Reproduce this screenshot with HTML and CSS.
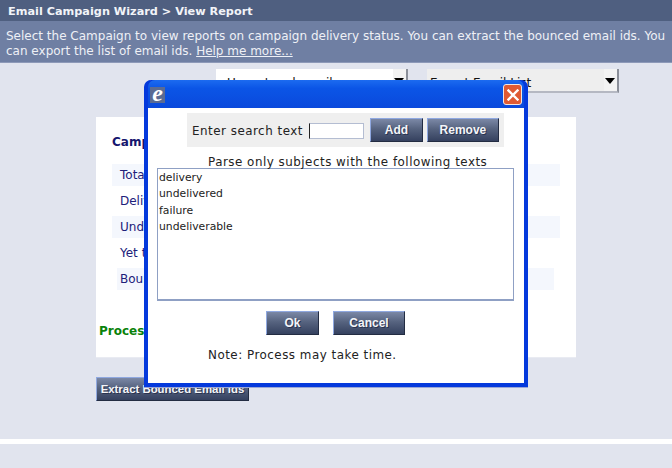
FILE: index.html
```html
<!DOCTYPE html>
<html lang="en">
<head>
  <meta charset="UTF-8" />
  <title>Email Campaign Wizard</title>
  <link rel="stylesheet" href="styles.css">
</head>

<body>
  <div class="title-bar">Email Campaign Wizard &gt; View Report</div>
  <div class="sub-bar">
    Select the Campaign to view reports on campaign delivery status. You can extract the bounced email ids. You can export the list of email ids. <a href="#">Help me more...</a>
  </div>

  <div class="picker-row">
    <div class="picker picker-white">Unsent and emails<span class="arrow"></span></div>
    <div class="picker picker-grey">Export Email List<span class="arrow"></span></div>
  </div>

  <section class="report">
    <h2>Campaign</h2>
    <div class="row shade">Total</div>
    <div class="row">Delivered</div>
    <div class="row shade">Undelivered</div>
    <div class="row">Yet to deliver</div>
    <div class="row shade short">Bounced</div>
    <p class="status">Process completed</p>
  </section>

  <button class="btn extract">Extract Bounced Email ids</button>

  <div class="band"></div>

  <!-- popup sits over the report -->
  <div class="dialog">
    <div class="dialog-title">
      <span class="app-icon">e</span>
      <span class="close">
        <svg width="12" height="12" viewBox="0 0 12 12"><path d="M1.5 1.5L10.5 10.5M10.5 1.5L1.5 10.5" stroke="#fff" stroke-width="2.4" stroke-linecap="square"/></svg>
      </span>
    </div>
    <div class="dialog-body">
      <div class="search-box">
        <label class="search-label">Enter search text</label>
        <input class="search-input" type="text">
        <button class="btn small add">Add</button>
        <button class="btn small remove">Remove</button>
      </div>
      <p class="parse-note">Parse only subjects with the following texts</p>
      <div class="subject-list">
        <div>delivery</div>
        <div>undelivered</div>
        <div>failure</div>
        <div>undeliverable</div>
      </div>
      <div class="dialog-actions">
        <button class="btn ok">Ok</button>
        <button class="btn cancel">Cancel</button>
      </div>
      <p class="time-note">Note: Process may take time.</p>
    </div>
  </div>
</body>
</html>
```

FILE: styles.css
```css
* {
  margin: 0;
  padding: 0;
  box-sizing: border-box;
}

body {
  font-family: 'DejaVu Sans', sans-serif;
  font-size: 12px;
  background: #e1e4ee;
  height: 468px;
  overflow: hidden;
  position: relative;
}

/* top bars */
.title-bar {
  height: 21px;
  padding: 1px 0 0 8px;
  background: #4f5f80;
  color: #f2f4f8;
  font-size: 11.27px;
  font-weight: bold;
  line-height: 22px;
}
.sub-bar {
  height: 42px;
  padding: 8px 0 0 6px;
  background: #6f7fa3;
  border-bottom: 1px solid #8d99b8;
  color: #eef0f6;
  font-size: 12px;
  line-height: 15px;
}
.sub-bar a {
  color: #eef0f6;
}

/* dropdowns behind the popup */
.picker-row {
  display: flex;
  gap: 19px;
  margin: 6px 0 0 216px;
}
.picker {
  position: relative;
  width: 192px;
  height: 24px;
  padding: 7px 3px;
  font-size: 12px;
  color: #111;
  border-right: 2px solid #8b8f99;
  border-bottom: 2px solid #b5b8c2;
}
.picker-white {
  background: #fff;
  padding-left: 11px;
}
.picker-grey {
  background: #eeeeee;
}
.arrow {
  position: absolute;
  right: 0;
  top: 0;
  width: 13px;
  height: 22px;
  background: #f3f3f3;
}
.arrow::after {
  content: "";
  position: absolute;
  left: 1px;
  top: 9px;
  border-left: 5px solid transparent;
  border-right: 5px solid transparent;
  border-top: 6px solid #000;
}

/* report panel */
.report {
  width: 480px;
  height: 241px;
  margin: 24px 0 0 96px;
  padding: 18px 16px 0;
  background: #fff;
  border-bottom: 1px solid #e9ebf2;
}
.report h2 {
  height: 29px;
  font-size: 12px;
  color: #16166e;
}
.row {
  width: 448px;
  height: 26px;
  padding: 4px 8px;
  color: #20207a;
  font-size: 12px;
}
.row.shade {
  background: #f4f7fd;
  height: 22px;
  margin-bottom: 4px;
}
.row.short {
  width: 437px;
  margin-left: 5px;
  padding-left: 3px;
}
.status {
  margin: 34px 0 0 -13px;
  color: #0a820a;
  font-size: 12px;
  font-weight: bold;
}

/* buttons */
.btn {
  font-family: 'Liberation Sans', sans-serif;
  font-size: 12px;
  font-weight: bold;
  color: #f4f5f8;
  background: linear-gradient(#7b88a6, #56637f 45%, #35415f);
  border: 1px solid;
  border-color: #8fa8e0 #232c42 #232c42 #8fa8e0;
  text-shadow: 1px 1px 0 #2a3350;
  white-space: nowrap;
}
.extract {
  display: block;
  width: 153px;
  height: 24px;
  margin: 19px 0 0 96px;
  padding: 0;
  font-size: 11.4px;
}

.band {
  height: 5px;
  margin-top: 38px;
  background: #fff;
}

/* popup window */
.dialog {
  position: absolute;
  left: 144px;
  top: 80px;
  width: 384px;
  height: 307px;
  background: #0439dc;
  border-radius: 7px 7px 0 0;
  border: 4px solid #0439dc;
  border-top: 0;
  box-shadow: 0 1px 0 #9aa6d8;
}
.dialog-title {
  display: flex;
  align-items: center;
  justify-content: space-between;
  height: 28px;
  padding: 1px 1px 0 2px;
  background: linear-gradient(#1c6bf0, #0b55e6 30%, #0a49dc);
  border-radius: 7px 7px 0 0;
}
.app-icon {
  width: 15px;
  height: 16px;
  background: #5a6b93;
  color: #fff;
  font-family: 'Liberation Serif', serif;
  font-size: 24px;
  font-style: italic;
  font-weight: bold;
  line-height: 12px;
  text-align: center;
}
.close {
  display: flex;
  align-items: center;
  justify-content: center;
  width: 19px;
  height: 21px;
  margin-right: 1px;
  background: #df5a34;
  border: 1px solid #f2e6e0;
  border-radius: 3px;
}
.dialog-body {
  height: 275px;
  padding-top: 5px;
  background: #fff;
  font-size: 11.9px;
  letter-spacing: 0.5px;
  color: #222;
}
.search-box {
  display: flex;
  align-items: center;
  width: 317px;
  height: 34px;
  margin-left: 39px;
  padding-left: 5px;
  background: #efefef;
}
.search-label {
  margin-right: 6px;
  padding-top: 2px;
}
.search-input {
  width: 55px;
  height: 16px;
  margin: 1px 6px 0 0;
  background: #fff;
  border: 1px solid #b4bdd2;
  border-left: 1px solid #222;
}
.btn.small {
  height: 24px;
  letter-spacing: 0;
}
.add {
  width: 53px;
  margin-right: 4px;
}
.remove {
  width: 72px;
}
.parse-note {
  margin: 8px 0 0 60px;
  line-height: 15px;
}
.subject-list {
  width: 357px;
  height: 133px;
  margin: -2px 0 0 9px;
  padding: 1px;
  border: 1px solid #8fa0c4;
  border-bottom: 2px solid #8fa0c4;
  font-size: 10.8px;
  letter-spacing: 0;
  line-height: 16.4px;
}
.dialog-actions {
  display: flex;
  gap: 14px;
  margin: 10px 0 0 118px;
}
.ok {
  width: 53px;
  height: 24px;
}
.cancel {
  width: 72px;
  height: 24px;
}
.ok, .cancel {
  letter-spacing: 0;
}
.time-note {
  margin: 13px 0 0 60px;
}
```
